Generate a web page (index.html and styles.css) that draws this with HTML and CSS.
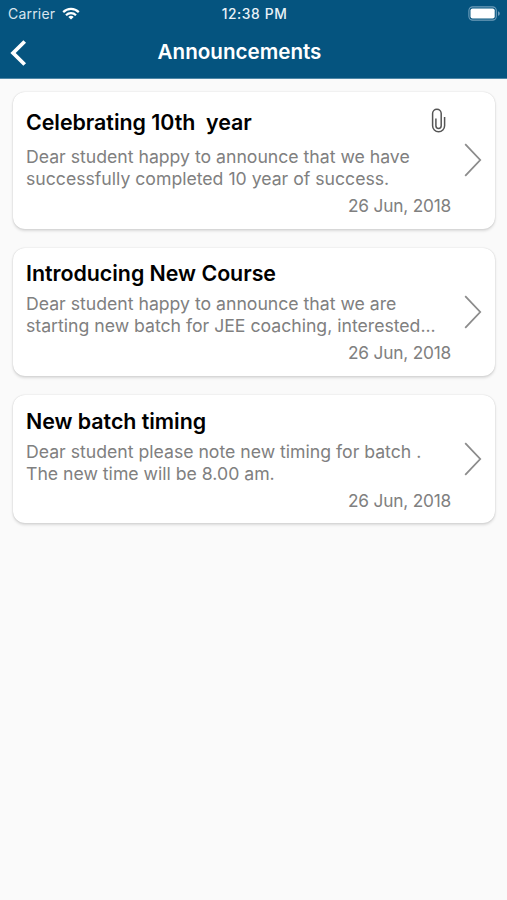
FILE: index.html
```html
<!DOCTYPE html>
<html lang="en">
<head>
<meta charset="utf-8">
<title>Announcements</title>
<link rel="stylesheet" href="styles.css">
</head>
<body>
<header class="header">
  <div class="status">
    <div class="carrier"><span>Carrier</span>
      <svg class="wifi" width="18" height="13" viewBox="0 0 18 13" fill="none" stroke="#fff" stroke-width="2.2"><path d="M1.2 5.1a11 11 0 0 1 15.6 0"/><path d="M4 8.2a7 7 0 0 1 10 0"/><path d="M9 12.6 6.3 10a3.9 3.9 0 0 1 5.4 0z" fill="#fff" stroke="none"/></svg>
    </div>
    <div class="time">12:38 PM</div>
    <svg class="battery" width="33" height="15" viewBox="0 0 33 15"><rect x=".9" y=".9" width="27.4" height="13.2" rx="3.8" fill="none" stroke="#6f9dba" stroke-width="1.1"/><rect x="2.5" y="2.5" width="24.2" height="10" rx="2" fill="#fff"/><path d="M30 5.2c2.4.8 2.4 3.8 0 4.6z" fill="#6f9dba"/></svg>
  </div>
  <div class="nav">
    <svg class="back" width="18" height="28" viewBox="0 0 18 28" fill="none" stroke="#fff" stroke-width="3.8"><path d="M15.7 2.5 4.1 14l11.6 11.5"/></svg>
    <h1>Announcements</h1>
  </div>
</header>
<main class="list">
  <article class="card card-attached">
    <div class="content">
      <h2>Celebrating 10th&nbsp; year
        <svg class="clip" width="15" height="25" viewBox="0 0 15 25" fill="none" stroke="#555" stroke-width="1.5"><path d="M10.2 17V5.5a4.3 4.3 0 0 0-8.6 0v12.3a6 6 0 0 0 12 0V9M4.9 10.6v7.2a2.65 2.65 0 0 0 5.3 0V5.8"/></svg>
      </h2>
      <p>Dear student happy to announce that we have<br>successfully completed 10 year of success.</p>
      <time>26 Jun, 2018</time>
    </div>
    <svg class="chevron" width="18" height="34" viewBox="0 0 18 34"><path d="m1.2 1.2 15 15.8-15 15.8"/></svg>
  </article>
  <article class="card">
    <div class="content">
      <h2>Introducing New Course</h2>
      <p>Dear student happy to announce that we are<br>starting new batch for JEE coaching, interested...</p>
      <time>26 Jun, 2018</time>
    </div>
    <svg class="chevron" width="18" height="34" viewBox="0 0 18 34"><path d="m1.2 1.2 15 15.8-15 15.8"/></svg>
  </article>
  <article class="card">
    <div class="content">
      <h2>New batch timing</h2>
      <p>Dear student please note new timing for batch .<br>The new time will be 8.00 am.</p>
      <time>26 Jun, 2018</time>
    </div>
    <svg class="chevron" width="18" height="34" viewBox="0 0 18 34"><path d="m1.2 1.2 15 15.8-15 15.8"/></svg>
  </article>
</main>
</body>
</html>
```

FILE: styles.css
```css
* { box-sizing: border-box; }
body {
  margin: 0;
  min-height: 900px;
  background: #fafafa;
  font-family: Inter, "Liberation Sans", sans-serif;
  color: #000;
}
h1, h2, p { margin: 0; white-space: nowrap; }
svg { display: block; flex: none; }
.header {
  height: 79px;
  background: #05547f;
  border-bottom: 1px solid #4f87a6;
  color: #fff;
}
.status {
  height: 27px;
  padding: 0 6px 0 8px;
  display: grid;
  grid-template-columns: 1fr auto 1fr;
  align-items: center;
  font-size: 14px;
}
.carrier { display: flex; align-items: center; gap: 7px; color: #d8e5ee; letter-spacing: .2px; }
.time { font-size: 13.8px; font-weight: 500; letter-spacing: .6px; color: #eaf2f7; }
.battery { justify-self: end; }
.nav {
  height: 51px;
  padding: 0 9px;
  display: grid;
  grid-template-columns: 18px 1fr 46px;
  align-items: center;
}
h1 { padding-bottom: 2px; font-size: 20.6px; line-height: 26px; font-weight: 600; text-align: center; }
.list {
  padding: 13px 12px 0 13px;
  display: grid;
  gap: 19px;
}
.card {
  height: 128.3px;
  padding: 0 13px;
  display: flex;
  align-items: center;
  background: #fff;
  border-radius: 12px;
  box-shadow: 0 0 1.5px rgba(0, 0, 0, .18), 0 2px 3px rgba(0, 0, 0, .13);
}
.card-attached { height: 136.6px; }
.content { flex: 1; min-width: 0; display: flex; flex-direction: column; }
h2 {
  height: 34px;
  display: flex;
  align-items: flex-start;
  justify-content: space-between;
  padding-right: 18px;
  font-size: 21.4px;
  line-height: 28px;
  font-weight: 600;
  letter-spacing: -.03px;
}
.card-attached h2 { height: 43px; padding-top: 5px; }
p { font-size: 17.65px; line-height: 22px; color: #808080; }
time { margin: 5px 13px 0 0; align-self: flex-end; font-size: 17.3px; line-height: 22px; letter-spacing: -.2px; color: #808080; }
.chevron { fill: none; stroke: #8c8c8c; stroke-width: 1.8; }
```
